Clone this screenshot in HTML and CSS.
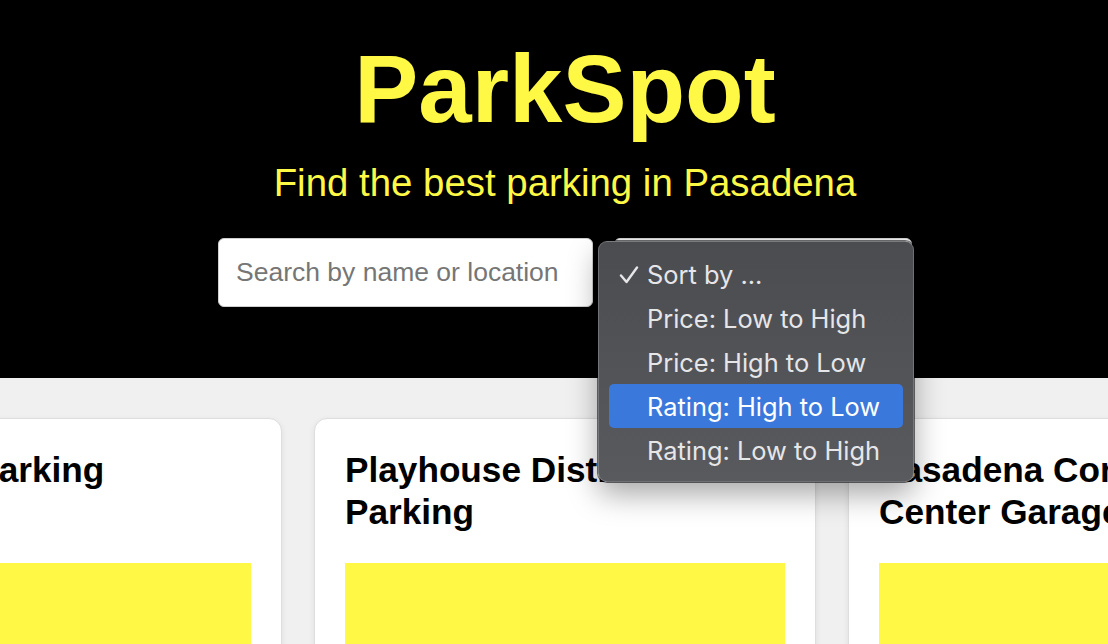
FILE: index.html
```html
<!DOCTYPE html>
<html lang="en">
<head>
<meta charset="utf-8">
<title>ParkSpot</title>
<link rel="stylesheet" href="styles.css">
</head>
<body>
<div class="page">
  <header class="hero">
    <h1 class="brand">ParkSpot</h1>
    <p class="tagline">Find the best parking in Pasadena</p>
    <div class="controls">
      <input class="search" type="text" placeholder="Search by name or location">
      <div class="sort">
        <div class="sort-box"></div>
        <ul class="menu">
          <li class="menu-item checked">
            <svg class="check" width="20" height="18" viewBox="0 0 20 18"><polyline points="2,9.5 7.5,16 18,1.5" fill="none" stroke="#e6e6e8" stroke-width="2.4" stroke-linecap="round" stroke-linejoin="round"/></svg>
            Sort by ...
          </li>
          <li class="menu-item">Price: Low to High</li>
          <li class="menu-item">Price: High to Low</li>
          <li class="menu-item active">Rating: High to Low</li>
          <li class="menu-item">Rating: Low to High</li>
        </ul>
      </div>
    </div>
  </header>
  <main class="listing">
    <div class="cards">
      <article class="card">
        <h2 class="card-title">Colorado Parking Structure</h2>
        <div class="card-media"></div>
      </article>
      <article class="card">
        <h2 class="card-title">Playhouse District Parking</h2>
        <div class="card-media"></div>
      </article>
      <article class="card">
        <h2 class="card-title">Pasadena Convention Center Garage</h2>
        <div class="card-media"></div>
      </article>
    </div>
  </main>
</div>
</body>
</html>
```
FILE: styles.css
```css
html, body {
  margin: 0;
  padding: 0;
  background: #f0f0f0;
  overflow: hidden;
}

.page {
  width: 1130px;
  font-family: "Liberation Sans", Arial, Helvetica, sans-serif;
}

.hero {
  background: #000;
  text-align: center;
  padding: 34px 0 71px;
}

.brand {
  margin: 0;
  font-size: 96px;
  font-weight: 700;
  line-height: normal;
  color: #fff946;
}

.tagline {
  margin: 17px 0 0;
  font-size: 38.4px;
  line-height: normal;
  color: #fff946;
}

.controls {
  margin-top: 33px;
  display: flex;
  justify-content: center;
  gap: 21px;
}

.search {
  box-sizing: border-box;
  width: 375px;
  height: 69px;
  padding: 0 17px;
  border: 1px solid #cfcfcf;
  border-radius: 6px;
  background: #fff;
  font-family: "Liberation Sans", Arial, sans-serif;
  font-size: 26.5px;
  color: #333;
  outline: none;
}

.search::placeholder {
  color: #767676;
}

.sort {
  position: relative;
  width: 298px;
  height: 69px;
}

.sort-box {
  box-sizing: border-box;
  height: 100%;
  border: 1px solid #d4d4d4;
  border-radius: 6px;
  background: #f4f4f4;
}

.menu {
  position: absolute;
  left: -16px;
  top: 3px;
  z-index: 10;
  box-sizing: border-box;
  width: 316px;
  margin: 0;
  padding: 10px 10px 9px;
  list-style: none;
  text-align: left;
  border-radius: 9px;
  border: 1px solid rgba(255, 255, 255, 0.2);
  background: linear-gradient(#4b4c50, #595a5e);
  box-shadow: 0 0 0 1px rgba(0, 0, 0, 0.55), 0 12px 30px rgba(0, 0, 0, 0.35);
  font-family: Inter, "Noto Sans", sans-serif;
}

.menu-item {
  position: relative;
  height: 44px;
  padding-left: 38px;
  display: flex;
  align-items: center;
  font-size: 25.4px;
  color: #e6e6e8;
  border-radius: 5px;
  white-space: nowrap;
}

.menu-item.active {
  background: #3b78dc;
  color: #fff;
}

.check {
  position: absolute;
  left: 10px;
  top: 14px;
}

.listing {
  padding-top: 40px;
}

.cards {
  display: flex;
  justify-content: center;
  gap: 32px;
}

.card {
  flex: 0 0 auto;
  box-sizing: border-box;
  width: 502px;
  padding: 30px;
  background: #fff;
  border: 1px solid #dedede;
  border-radius: 13px;
  box-shadow: 0 2px 6px rgba(0, 0, 0, 0.08);
}

.card-title {
  margin: 0 0 30px;
  font-size: 35.2px;
  line-height: 1.2;
  font-weight: 700;
  color: #000;
}

.card-media {
  height: 240px;
  background: #fff946;
}
```
